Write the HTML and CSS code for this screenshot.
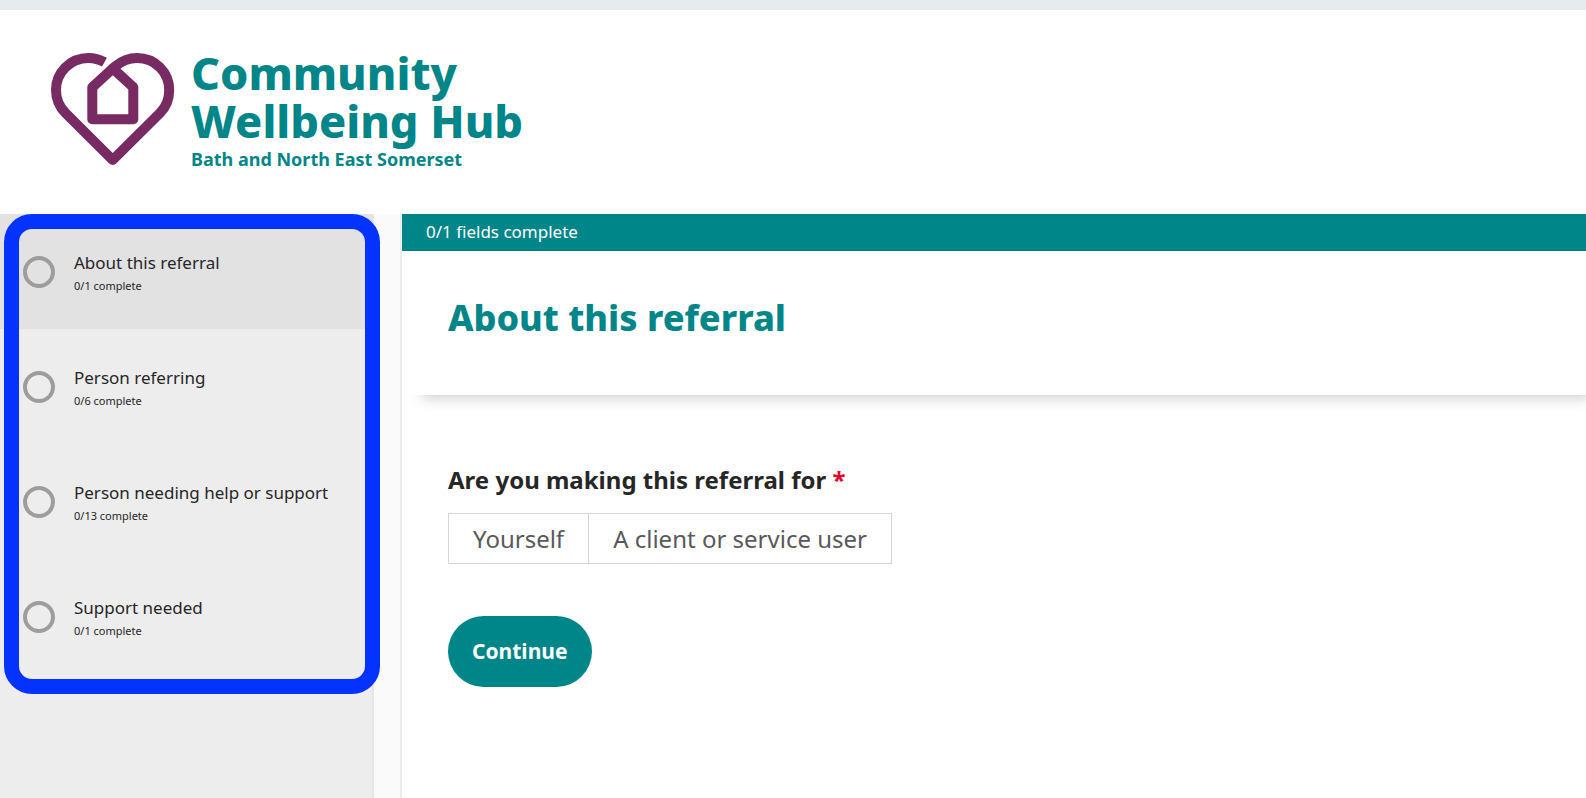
FILE: index.html
```html
<!DOCTYPE html>
<html lang="en">
<head>
<meta charset="utf-8">
<meta name="viewport" content="width=device-width, initial-scale=1">
<title>Community Wellbeing Hub</title>
<link rel="stylesheet" href="styles.css">
</head>
<body>
<header class="site-header">
  <div class="brand">
    <svg class="brand-mark" viewBox="50 52 125 114" aria-hidden="true">
      <path d="M104.500 62.200C99 59.200 94 58 88.500 58C70 58 56 72.500 56 90C56 99 59.500 107 65.500 113L112.700 160L160 113C166 107 169.200 99 169.200 90C169.200 72.500 155.500 58 137 58C128.500 58 121.500 61 115 66.500L92.300 87.200V119.300H133.300V87.200L114 69.500"/>
    </svg>
    <div class="brand-text">
      <span class="brand-name">Community</span>
      <span class="brand-name">Wellbeing Hub</span>
      <span class="brand-place">Bath and North East Somerset</span>
    </div>
  </div>
</header>
<div class="layout">
  <aside class="sidebar">
    <nav class="steps" aria-label="Form sections">
      <a class="step step-current" href="#about" aria-current="step"><span class="step-ring"></span><span class="step-text"><span class="step-title">About this referral</span><span class="step-count">0/1 complete</span></span></a>
      <a class="step" href="#referrer"><span class="step-ring"></span><span class="step-text"><span class="step-title">Person referring</span><span class="step-count">0/6 complete</span></span></a>
      <a class="step" href="#person"><span class="step-ring"></span><span class="step-text"><span class="step-title">Person needing help or support</span><span class="step-count">0/13 complete</span></span></a>
      <a class="step" href="#support"><span class="step-ring"></span><span class="step-text"><span class="step-title">Support needed</span><span class="step-count">0/1 complete</span></span></a>
      <div class="highlight"></div>
    </nav>
  </aside>
  <main class="content" id="about">
    <div class="progress">0/1 fields complete</div>
    <div class="title-bar"><h1 class="title">About this referral</h1></div>
    <form class="form">
      <fieldset class="question">
        <legend class="question-label">Are you making this referral for <span class="required">*</span></legend>
        <div class="choices">
          <label class="choice"><input class="choice-input" type="radio" name="referral-for" value="self">Yourself</label>
          <label class="choice"><input class="choice-input" type="radio" name="referral-for" value="client">A client or service user</label>
        </div>
      </fieldset>
      <button class="continue" type="button">Continue</button>
    </form>
  </main>
</div>
</body>
</html>
```
FILE: styles.css
```css
* {
  box-sizing: border-box;
}

body {
  margin: 0;
  min-height: 100vh;
  display: flex;
  flex-direction: column;
  font-family: "Noto Sans", "Open Sans", sans-serif;
  color: #262626;
  background: #fff;
}

.site-header {
  border-top: 10px solid #e7ebee;
  padding: 39px 50px 40px;
}

.brand {
  display: flex;
  align-items: flex-start;
  gap: 16px;
}

.brand-mark {
  width: 125px;
  height: 114px;
  margin-top: 3px;
  fill: none;
  stroke: #782b62;
  stroke-width: 10;
  stroke-linejoin: round;
}

.brand-text {
  display: flex;
  flex-direction: column;
  color: #008588;
}

.brand-name {
  font-size: 45px;
  line-height: 48px;
  font-weight: 800;
}

.brand-place {
  font-size: 18px;
  line-height: 29px;
  font-weight: 700;
}

.layout {
  flex: 1;
  display: flex;
  gap: 26px;
  background: #fafafa;
}

.sidebar {
  flex: 0 0 374px;
  background: #ededed;
  border-right: 2px solid #e6e6e6;
}

.steps {
  position: relative;
}

.step {
  display: flex;
  gap: 19px;
  height: 115px;
  padding: 36px 23px;
  color: inherit;
  text-decoration: none;
}

.step-current {
  background: #e2e2e2;
}

.step-ring {
  flex: none;
  width: 32px;
  height: 32px;
  margin-top: 6px;
  border: 4px solid #9d9d9d;
  border-radius: 50%;
}

.step-text {
  display: flex;
  flex-direction: column;
}

.step-title {
  font-size: 17px;
  line-height: 26px;
}

.step-count {
  font-size: 11px;
  line-height: 20px;
}

.highlight {
  position: absolute;
  inset: 0 -8px -20px 4px;
  border: 15px solid #0433ff;
  border-radius: 28px;
  pointer-events: none;
}

.content {
  flex: 1;
  border-left: 2px solid #ededed;
  background: #fff;
}

.progress {
  padding: 5px 24px 6px;
  font-size: 17px;
  line-height: 26px;
  color: #fff;
  background: #008588;
}

.title-bar {
  padding: 43px 46px 53px;
  box-shadow: 12px 10px 14px -8px rgba(0, 0, 0, 0.22);
  clip-path: inset(0 0 -20px 0);
}

.title {
  margin: 0;
  font-size: 36px;
  line-height: 48px;
  font-weight: 800;
  color: #008588;
}

.form {
  padding: 67px 46px;
}

.question {
  margin: 0 0 52px;
  padding: 0;
  border: 0;
}

.question-label {
  padding: 0;
  margin-bottom: 15px;
  font-size: 24px;
  line-height: 36px;
  font-weight: 700;
}

.required {
  color: #e4002b;
}

.choices {
  display: inline-flex;
  border: 1px solid #d6d6d6;
}

.choice {
  position: relative;
  padding: 7px 24px 6px;
  font-size: 24px;
  line-height: 36px;
  color: #58595b;
  cursor: pointer;
}

.choice + .choice {
  border-left: 1px solid #d6d6d6;
}

.choice-input {
  position: absolute;
  inset: 0;
  margin: 0;
  opacity: 0;
}

.continue {
  padding: 20px 24px 21px;
  border: 0;
  border-radius: 36px;
  font-family: inherit;
  font-size: 21px;
  line-height: 30px;
  font-weight: 700;
  color: #fff;
  background: #008588;
}
```
